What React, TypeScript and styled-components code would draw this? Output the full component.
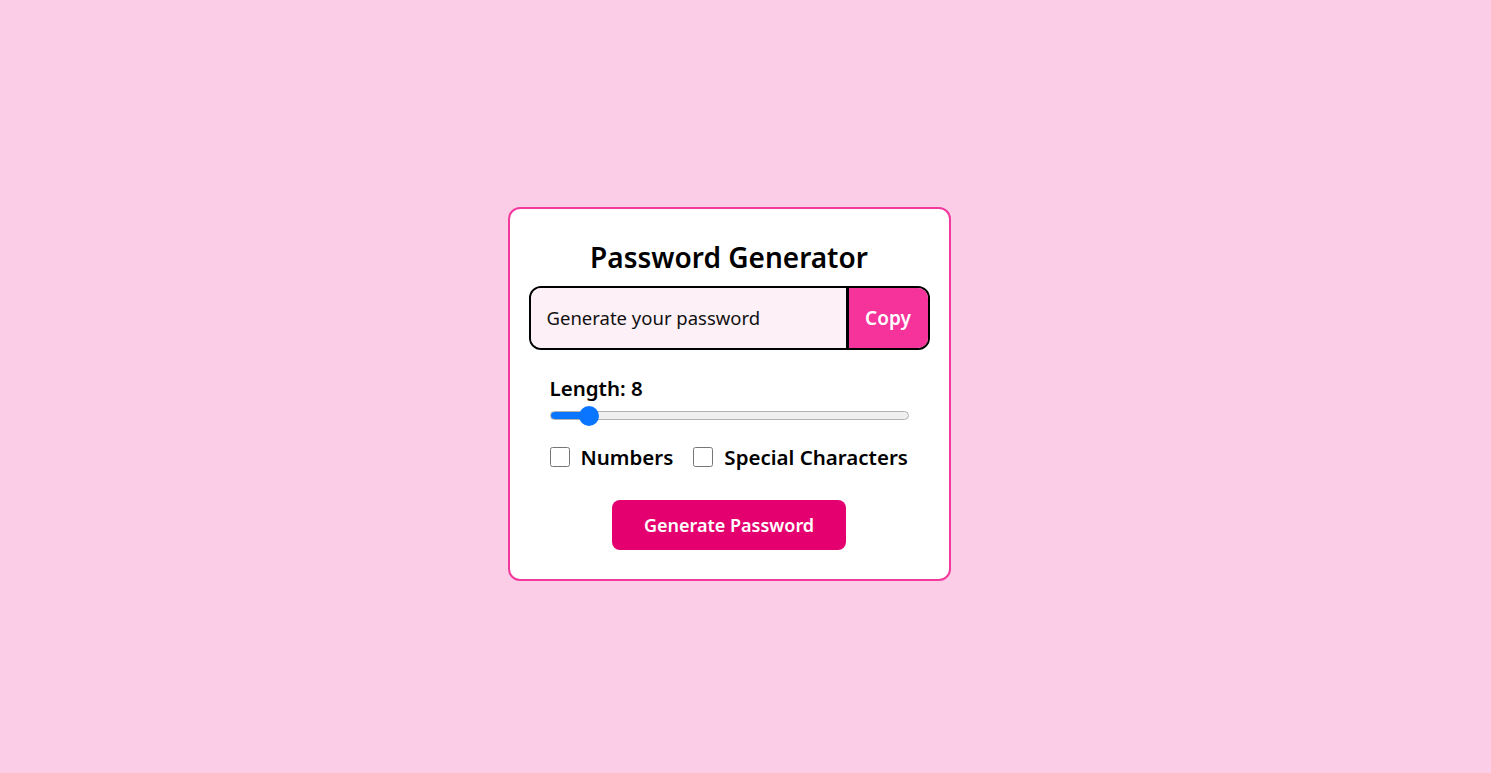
import React, { useState } from "react";
import styled, { createGlobalStyle } from "styled-components";

const Global = createGlobalStyle`
  html, body { margin: 0; padding: 0; }
  body {
    background: #fccde7;
    font-family: "Noto Sans", "Open Sans", sans-serif;
  }
`;

const Page = styled.div`
  height: 773px;
  box-sizing: border-box;
  padding-right: 33px;
  display: flex;
  align-items: center;
  justify-content: center;
`;

const Card = styled.div`
  width: 443px;
  box-sizing: border-box;
  background: #ffffff;
  border: 2px solid #f23a9e;
  border-radius: 12px;
  padding: 28px 19px 29px;
  display: flex;
  flex-direction: column;
  align-items: stretch;
  margin-top: 14px;
`;

const Title = styled.h1`
  margin: 0 0 9px;
  text-align: center;
  font-size: 28px;
  font-weight: 600;
  color: #000;
  line-height: 40px;
`;

const Group = styled.div`
  display: flex;
  height: 64px;
  box-sizing: border-box;
  border: 2px solid #000;
  border-radius: 12px;
  overflow: hidden;
`;

const PwInput = styled.input`
  flex: 1;
  min-width: 0;
  border: none;
  border-right: 3px solid #000;
  background: #fdf0f7;
  padding: 0 16px;
  font-family: inherit;
  font-size: 18.5px;
  color: #111;
  outline: none;
  &::placeholder { color: #111; }
`;

const CopyButton = styled.button`
  width: 79px;
  border: none;
  background: #f5339b;
  color: #fff;
  font-family: inherit;
  font-size: 19px;
  font-weight: 600;
  cursor: pointer;
`;

const Controls = styled.div`
  padding: 24px 21px 0;
  display: flex;
  flex-direction: column;
`;

const LengthLabel = styled.label`
  font-size: 20.5px;
  font-weight: 600;
  color: #000;
  line-height: 28px;
`;

const Range = styled.input<{ $pct: number }>`
  -webkit-appearance: none;
  appearance: none;
  width: 100%;
  height: 20px;
  margin: 4px 0 0;
  background: transparent;
  outline: none;

  &::-webkit-slider-runnable-track {
    height: 9px;
    box-sizing: border-box;
    border-radius: 5px;
    border: 1px solid #b2b2b2;
    background: linear-gradient(
      to right,
      #0a75ff 0%,
      #0a75ff ${(p) => p.$pct}%,
      #efefef ${(p) => p.$pct}%,
      #efefef 100%
    );
  }
  &::-webkit-slider-thumb {
    -webkit-appearance: none;
    width: 20px;
    height: 20px;
    border-radius: 50%;
    background: #0a75ff;
    border: none;
    margin-top: -6.5px;
  }
`;

const Options = styled.div`
  display: flex;
  align-items: center;
  gap: 20px;
  margin-top: 17px;
`;

const Option = styled.label`
  display: flex;
  align-items: center;
  gap: 11px;
  font-size: 20.5px;
  font-weight: 600;
  color: #000;
`;

const Check = styled.input`
  width: 20px;
  height: 20px;
  margin: 0;
`;

const Generate = styled.button`
  align-self: center;
  margin-top: 29px;
  width: 234px;
  height: 50px;
  border: none;
  border-radius: 8px;
  background: #e4006f;
  color: #fff;
  font-family: inherit;
  font-size: 18px;
  font-weight: 600;
  cursor: pointer;
`;

const MIN = 6;
const MAX = 30;

export default function App() {
  const [len, setLen] = useState(8);
  const pct = 2.8 + ((len - MIN) / (MAX - MIN)) * (100 - 5.6);
  return (
    <>
      <Global />
      <Page>
        <Card>
          <Title>Password Generator</Title>
          <Group>
            <PwInput readOnly placeholder="Generate your password" />
            <CopyButton>Copy</CopyButton>
          </Group>
          <Controls>
            <LengthLabel>Length: {len}</LengthLabel>
            <Range
              type="range"
              min={MIN}
              max={MAX}
              value={len}
              $pct={pct}
              onChange={(e) => setLen(Number(e.target.value))}
            />
            <Options>
              <Option><Check type="checkbox" />Numbers</Option>
              <Option><Check type="checkbox" />Special Characters</Option>
            </Options>
          </Controls>
          <Generate>Generate Password</Generate>
        </Card>
      </Page>
    </>
  );
}
